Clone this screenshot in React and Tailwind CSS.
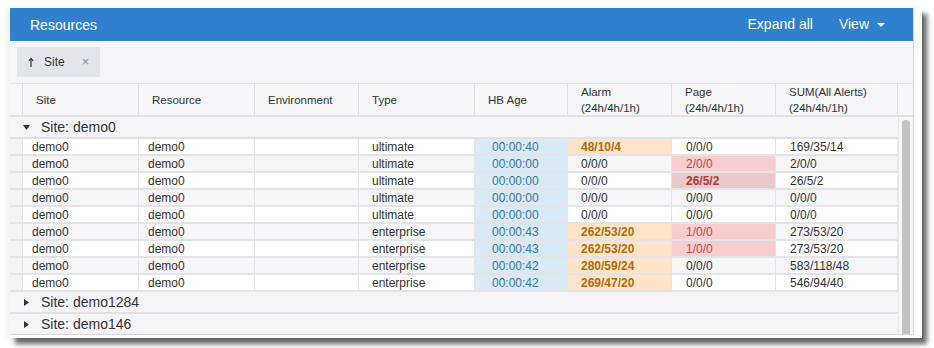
const cols = [
  { key: 'site', label: ['Site'], w: 'w-[116px]', hp: 'pl-[13px]', dp: 'pl-[9px]' },
  { key: 'resource', label: ['Resource'], w: 'w-[116px]', hp: 'pl-[13px]', dp: 'pl-[9px]' },
  { key: 'env', label: ['Environment'], w: 'w-[104px]', hp: 'pl-[13px]', dp: 'pl-[13px]' },
  { key: 'type', label: ['Type'], w: 'w-[116px]', hp: 'pl-[13px]', dp: 'pl-[13px]' },
  { key: 'hb', label: ['HB Age'], w: 'w-[93px]', hp: 'pl-[13px]', dp: 'pl-[17px]' },
  { key: 'alarm', label: ['Alarm', '(24h/4h/1h)'], w: 'w-[104px]', hp: 'pl-[13px]', dp: 'pl-[13px]' },
  { key: 'page', label: ['Page', '(24h/4h/1h)'], w: 'w-[104px]', hp: 'pl-[13px]', dp: 'pl-[14px]' },
  { key: 'sum', label: ['SUM(All Alerts)', '(24h/4h/1h)'], w: 'w-[122px]', hp: 'pl-[13px]', dp: 'pl-[14px]' },
];

const rows = [
  { type: 'ultimate', hb: '00:00:40', alarm: '48/10/4', hot: true, page: '0/0/0', pl: 0, sum: '169/35/14' },
  { type: 'ultimate', hb: '00:00:00', alarm: '0/0/0', hot: false, page: '2/0/0', pl: 1, sum: '2/0/0' },
  { type: 'ultimate', hb: '00:00:00', alarm: '0/0/0', hot: false, page: '26/5/2', pl: 2, sum: '26/5/2' },
  { type: 'ultimate', hb: '00:00:00', alarm: '0/0/0', hot: false, page: '0/0/0', pl: 0, sum: '0/0/0' },
  { type: 'ultimate', hb: '00:00:00', alarm: '0/0/0', hot: false, page: '0/0/0', pl: 0, sum: '0/0/0' },
  { type: 'enterprise', hb: '00:00:43', alarm: '262/53/20', hot: true, page: '1/0/0', pl: 1, sum: '273/53/20' },
  { type: 'enterprise', hb: '00:00:43', alarm: '262/53/20', hot: true, page: '1/0/0', pl: 1, sum: '273/53/20' },
  { type: 'enterprise', hb: '00:00:42', alarm: '280/59/24', hot: true, page: '0/0/0', pl: 0, sum: '583/118/48' },
  { type: 'enterprise', hb: '00:00:42', alarm: '269/47/20', hot: true, page: '0/0/0', pl: 0, sum: '546/94/40' },
];

function Caret({ open }) {
  return open ? (
    <svg width="7" height="5" viewBox="0 0 7 5" className="fill-[#333]"><path d="M0 0h7L3.5 5z" /></svg>
  ) : (
    <svg width="5" height="7" viewBox="0 0 5 7" className="fill-[#333]"><path d="M0 0l5 3.5L0 7z" /></svg>
  );
}

function GroupRow({ name, open }) {
  return (
    <div className="flex h-[22px] items-center border-b-2 border-[#e1e1e4] bg-[#f5f5f7] text-[14px] text-[#333]">
      <div className="flex w-[31px] justify-center pl-[2px]">
        <Caret open={open} />
      </div>
      <span>Site: {name}</span>
    </div>
  );
}

function cellTone(col, r) {
  if (col.key === 'hb') return 'bg-[#d7eaf5] text-[#3a77a3]';
  if (col.key === 'alarm' && r.hot) return 'bg-[#fde4c8] text-[#ad6d0b] font-bold';
  if (col.key === 'page' && r.pl === 1) return 'bg-[#f8cdcf] text-[#c4474c]';
  if (col.key === 'page' && r.pl === 2) return 'bg-[#e9c9cb] text-[#b23a40] font-bold';
  return 'text-[#333]';
}

function DataRow({ r, i }) {
  const values = { site: 'demo0', resource: 'demo0', env: '', type: r.type, hb: r.hb, alarm: r.alarm, page: r.page, sum: r.sum };
  return (
    <div className={`flex h-[17px] border-b-2 border-[#e4e4e6] text-[12px] ${i % 2 ? 'bg-[#f6f6f8]' : 'bg-white'}`}>
      <div className="w-[13px] shrink-0 border-r border-[#e1e1e4] bg-[#f3f3f5]" />
      {cols.map((c) => (
        <div key={c.key} className={`${c.w} ${c.dp} ${cellTone(c, r)} flex shrink-0 items-center border-r border-[#e4e4e6] leading-none`}>
          {values[c.key]}
        </div>
      ))}
    </div>
  );
}

export default function App() {
  return (
    <div className="h-[348px] w-[934px] overflow-hidden bg-white pl-[10px] pt-[8px] font-['Liberation_Sans',Arial,sans-serif]">
      <div className="h-[330px] w-[912px] bg-white shadow-[5px_6px_5px_rgba(0,0,0,0.6),-3px_0_6px_rgba(0,0,0,0.06)]">
        <div className="flex h-[327px] w-[904px] flex-col overflow-hidden border-r border-b border-[#d6d6d9]">
          <header className="flex h-[33px] shrink-0 items-center bg-[#3080cd] pl-[20px] pr-[28px] text-[14px] text-white">
            <span className="pt-[2px]">Resources</span>
            <span className="ml-auto">Expand all</span>
            <span className="ml-[26px] flex items-center gap-[8px]">
              View
              <svg width="8" height="4" viewBox="0 0 8 4" className="fill-white"><path d="M0 0h8L4 4z" /></svg>
            </span>
          </header>

          <div className="flex h-[43px] shrink-0 items-start border-b border-[#e2e2e5] bg-[#f5f5f8] pl-[7px] pt-[6px]">
            <div className="flex h-[30px] w-[83px] items-center bg-[#e3e5e9] pl-[11px] text-[12px] text-[#333]">
              <svg width="6" height="10" viewBox="0 0 6 10" className="fill-none stroke-[#333]" strokeWidth="1.2">
                <path d="M3 10V1.5M0.8 3.8L3 1.3l2.2 2.5" />
              </svg>
              <span className="ml-[10px]">Site</span>
              <span className="ml-[17px] text-[13px] text-[#888]">×</span>
            </div>
          </div>

          <div className="flex h-[33px] shrink-0 border-b-2 border-[#e1e1e4] bg-[#f6f6f8] text-[11.5px] text-[#333]">
            <div className="w-[13px] shrink-0 border-r border-[#dedee1]" />
            {cols.map((c) => (
              <div key={c.key} className={`${c.w} ${c.hp} flex shrink-0 flex-col justify-center gap-[3px] border-r border-[#dedee1] pt-[1px] leading-[13px]`}>
                {c.label.map((l) => (
                  <span key={l}>{l}</span>
                ))}
              </div>
            ))}
            <div className="flex-1" />
          </div>

          <div className="flex min-h-0 flex-1">
            <div className="w-[888px] shrink-0">
              <GroupRow name="demo0" open />
              {rows.map((r, i) => (
                <DataRow key={i} r={r} i={i} />
              ))}
              <GroupRow name="demo1284" />
              <GroupRow name="demo146" />
              <div className="h-[17px] bg-[#f5f5f7]" />
            </div>
            <div className="flex-1 border-l border-[#e6e6e8] bg-[#f7f7f7] pl-[3px] pt-[3px]">
              <div className="h-[260px] w-[8px] rounded-full bg-[#c2c2c2]" />
            </div>
          </div>
        </div>
      </div>
    </div>
  );
}
